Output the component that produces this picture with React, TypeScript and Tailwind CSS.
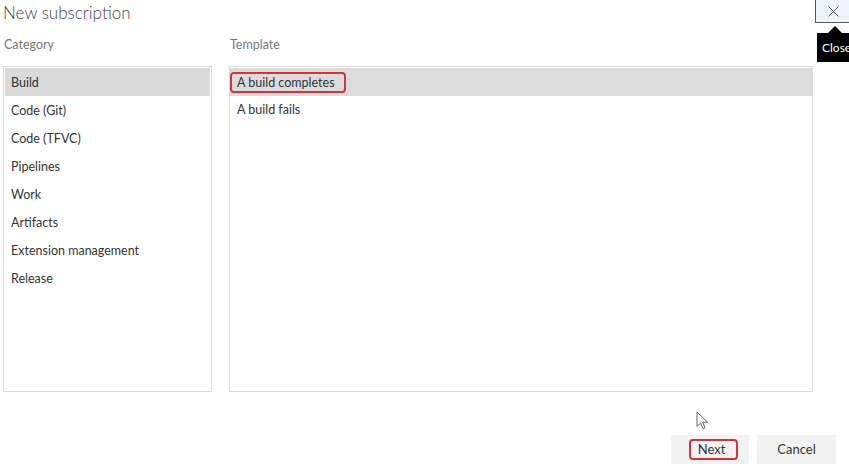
import React from "react";

const categories = [
  "Build",
  "Code (Git)",
  "Code (TFVC)",
  "Pipelines",
  "Work",
  "Artifacts",
  "Extension management",
  "Release",
];

const templates = ["A build completes", "A build fails"];

const font = { fontFamily: '"Segoe UI", Lato, "Open Sans", sans-serif' };

export default function App() {
  return (
    <div
      className="relative w-[849px] h-[471px] overflow-hidden bg-white text-[#333]"
      style={font}
    >
      {/* Header */}
      <h1 className="pl-[3px] h-[28px] leading-[26px] text-[17px] font-light text-[#444]">
        New subscription
      </h1>

      <div className="flex gap-[17px] pl-[3px] pt-[6px]">
        {/* Category column */}
        <div className="w-[209px]">
          <p className="h-[22px] pl-[1px] leading-[22px] text-[12.5px] text-[#777]">Category</p>
          <ul className="mt-[10px] h-[326px] border border-[#dcdcdc] p-[1px]">
            {categories.map((c, i) => (
              <li
                key={c}
                className={`h-[28px] pl-[6px] pt-[1px] leading-[27px] text-[12.5px] ${
                  i === 0 ? "bg-[#dadada]" : ""
                }`}
              >
                {c}
              </li>
            ))}
          </ul>
        </div>

        {/* Template column */}
        <div className="w-[584px]">
          <p className="h-[22px] pl-[1px] leading-[22px] text-[12.5px] text-[#777]">Template</p>
          <ul className="mt-[10px] h-[326px] border border-[#dcdcdc]">
            {templates.map((t, i) => (
              <li
                key={t}
                className={`flex h-[28px] items-center pt-[1px] text-[12.5px] ${
                  i === 0 ? "mt-[1px] bg-[#dcdcdc]" : "pl-[7px]"
                }`}
              >
                {i === 0 ? (
                  <span className="h-[21px] rounded-[4px] border-2 border-[#d1343c] pl-[5px] pr-[9px] leading-[17px]">
                    {t}
                  </span>
                ) : (
                  t
                )}
              </li>
            ))}
          </ul>
        </div>
      </div>

      {/* Footer buttons */}
      <div className="mt-[43px] mr-[13px] flex justify-end gap-[8px]">
        <button className="flex h-[29px] w-[78px] items-center justify-center bg-[#f2f2f2] pl-[6px] text-[13px]">
          <span className="flex h-[21px] w-[49px] items-center justify-center rounded-[4px] border-2 border-[#d1343c] pr-[3px]">
            Next
          </span>
        </button>
        <button className="h-[29px] w-[79px] bg-[#f2f2f2] text-[13px]">Cancel</button>
      </div>

      {/* Close button */}
      <button className="absolute right-[-2px] top-[-1px] flex h-[24px] w-[36px] items-center justify-center border border-[#555] bg-[#eef4fb]">
        <svg width="11" height="11" viewBox="0 0 11 11" stroke="#444" strokeWidth="0.9">
          <path d="M0.5 0.5l10 10M10.5 0.5l-10 10" />
        </svg>
      </button>

      {/* Tooltip */}
      <div className="absolute left-[817px] top-[33px] h-[29px] w-[40px] bg-black pl-[5px] text-[12px] leading-[29px] text-white">
        Close
      </div>
      <svg className="absolute left-[827px] top-[26px]" width="16" height="8" viewBox="0 0 16 8">
        <path d="M0 8L8 0L16 8Z" fill="#000" />
      </svg>

      {/* Mouse pointer */}
      <svg className="absolute left-[696px] top-[411px]" width="13" height="19" viewBox="0 0 13 19">
        <path
          d="M1 1v14.5l3.6-3.4 2.4 5.6 2.1-0.9-2.4-5.5h5z"
          fill="#fff"
          stroke="#555"
          strokeWidth="0.9"
          strokeLinejoin="round"
        />
      </svg>
    </div>
  );
}
